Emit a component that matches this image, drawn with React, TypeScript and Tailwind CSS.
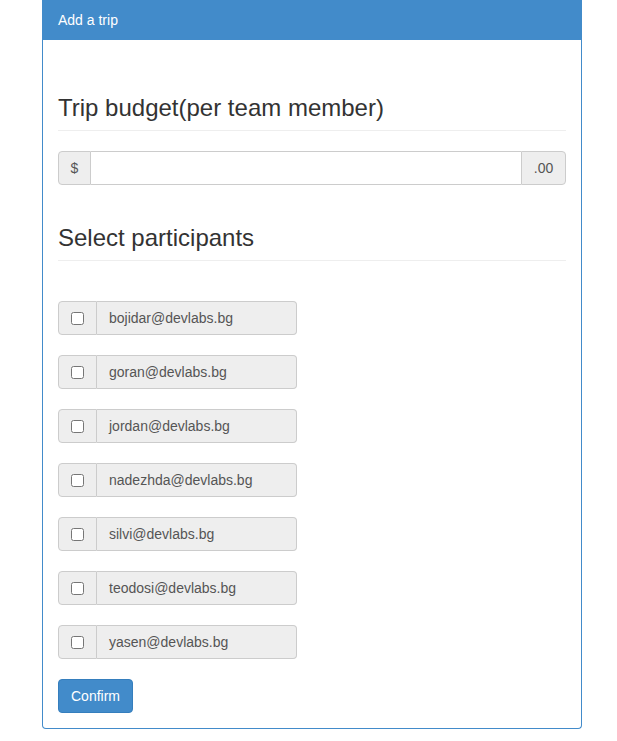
const participants = [
  "bojidar@devlabs.bg",
  "goran@devlabs.bg",
  "jordan@devlabs.bg",
  "nadezhda@devlabs.bg",
  "silvi@devlabs.bg",
  "teodosi@devlabs.bg",
  "yasen@devlabs.bg",
];

function PageHeader({ children }: { children: React.ReactNode }) {
  return (
    <div className="mt-10 mb-5 pb-[9px] border-b border-[#eee]">
      <h3 className="text-[24px] leading-[26px] font-normal text-[#333]">{children}</h3>
    </div>
  );
}

export default function App() {
  return (
    <div
      className="min-h-[741px] bg-white text-[14px] text-[#333]"
      style={{ fontFamily: '"Liberation Sans", Arial, sans-serif' }}
    >
      <div className="ml-[42px] w-[540px] border border-t-0 border-[#428bca] rounded-b-[4px] bg-white">
        <div className="bg-[#428bca] text-white px-[15px] py-[10px] leading-5 h-10">Add a trip</div>
        <div className="p-[15px]">
          <PageHeader>Trip budget(per team member)</PageHeader>

          <div className="flex h-[34px]">
            <span className="flex items-center justify-center w-[33px] bg-[#eee] border border-[#ccc] rounded-l-[4px] text-[#555]">
              $
            </span>
            <input
              type="text"
              className="flex-1 border-y border-[#ccc] px-3 outline-none text-[#555]"
            />
            <span className="flex items-center justify-center w-[45px] bg-[#eee] border border-[#ccc] rounded-r-[4px] text-[#555]">
              .00
            </span>
          </div>

          <PageHeader>Select participants</PageHeader>

          <div className="flex flex-col gap-5 pt-5">
            {participants.map((p) => (
              <div key={p} className="flex h-[34px] w-[239px]">
                <span className="flex items-center justify-center w-[39px] bg-[#eee] border border-[#ccc] rounded-l-[4px]">
                  <input type="checkbox" className="w-[13px] h-[13px] m-0" />
                </span>
                <span className="flex-1 flex items-center px-3 bg-[#eee] border border-l-0 border-[#ccc] rounded-r-[4px] text-[#555]">
                  {p}
                </span>
              </div>
            ))}
          </div>

          <button className="mt-5 h-[34px] w-[75px] bg-[#428bca] border border-[#357ebd] rounded-[4px] text-white leading-5">
            Confirm
          </button>
        </div>
      </div>
    </div>
  );
}
